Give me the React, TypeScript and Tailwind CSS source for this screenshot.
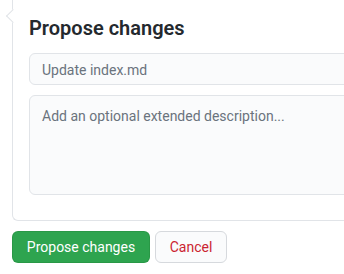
export default function App() {
  return (
    <div
      className="relative h-[274px] w-[344px] overflow-hidden bg-white"
      style={{ fontFamily: 'Roboto, "Liberation Sans", sans-serif' }}
    >
      {/* Comment box */}
      <div className="relative ml-[12px] w-[360px] rounded-bl-md border-b border-l border-[#e1e4e8] pb-[25px] pl-[16px] pr-[16px] pt-[13px]">
        <span className="absolute left-[-5.5px] top-[10.5px] h-[10px] w-[10px] rotate-45 border-b border-l border-[#e1e4e8] bg-white" />
        <h2 className="text-[20px] font-semibold leading-[30px] text-[#24292e]">Propose changes</h2>
        <input
          className="mt-[10px] block h-[32px] w-full rounded-md border border-[#e1e4e8] bg-[#fafbfc] px-[12px] pt-[2px] text-[14px] text-[#24292e] placeholder:text-[#6a737d] outline-none"
          placeholder="Update index.md"
        />
        <textarea
          className="mt-[10px] block h-[100px] w-full resize-none rounded-md border border-[#e1e4e8] bg-[#fafbfc] px-[12px] pb-[8px] pt-[10px] text-[14px] leading-[20px] text-[#24292e] placeholder:text-[#6a737d] outline-none"
          placeholder="Add an optional extended description..."
        />
      </div>

      {/* Actions */}
      <div className="ml-[12px] mt-[10px] flex gap-[5px]">
        <button className="h-[32px] w-[138px] rounded-md border border-[#22863a]/40 bg-[#2ea44f] pt-[1px] text-[14px] text-white">
          Propose changes
        </button>
        <button className="h-[32px] w-[72px] rounded-md border border-[#d6d9dd] bg-[#fafbfc] pt-[1px] text-[14px] text-[#cb2431]">
          Cancel
        </button>
      </div>
    </div>
  )
}
